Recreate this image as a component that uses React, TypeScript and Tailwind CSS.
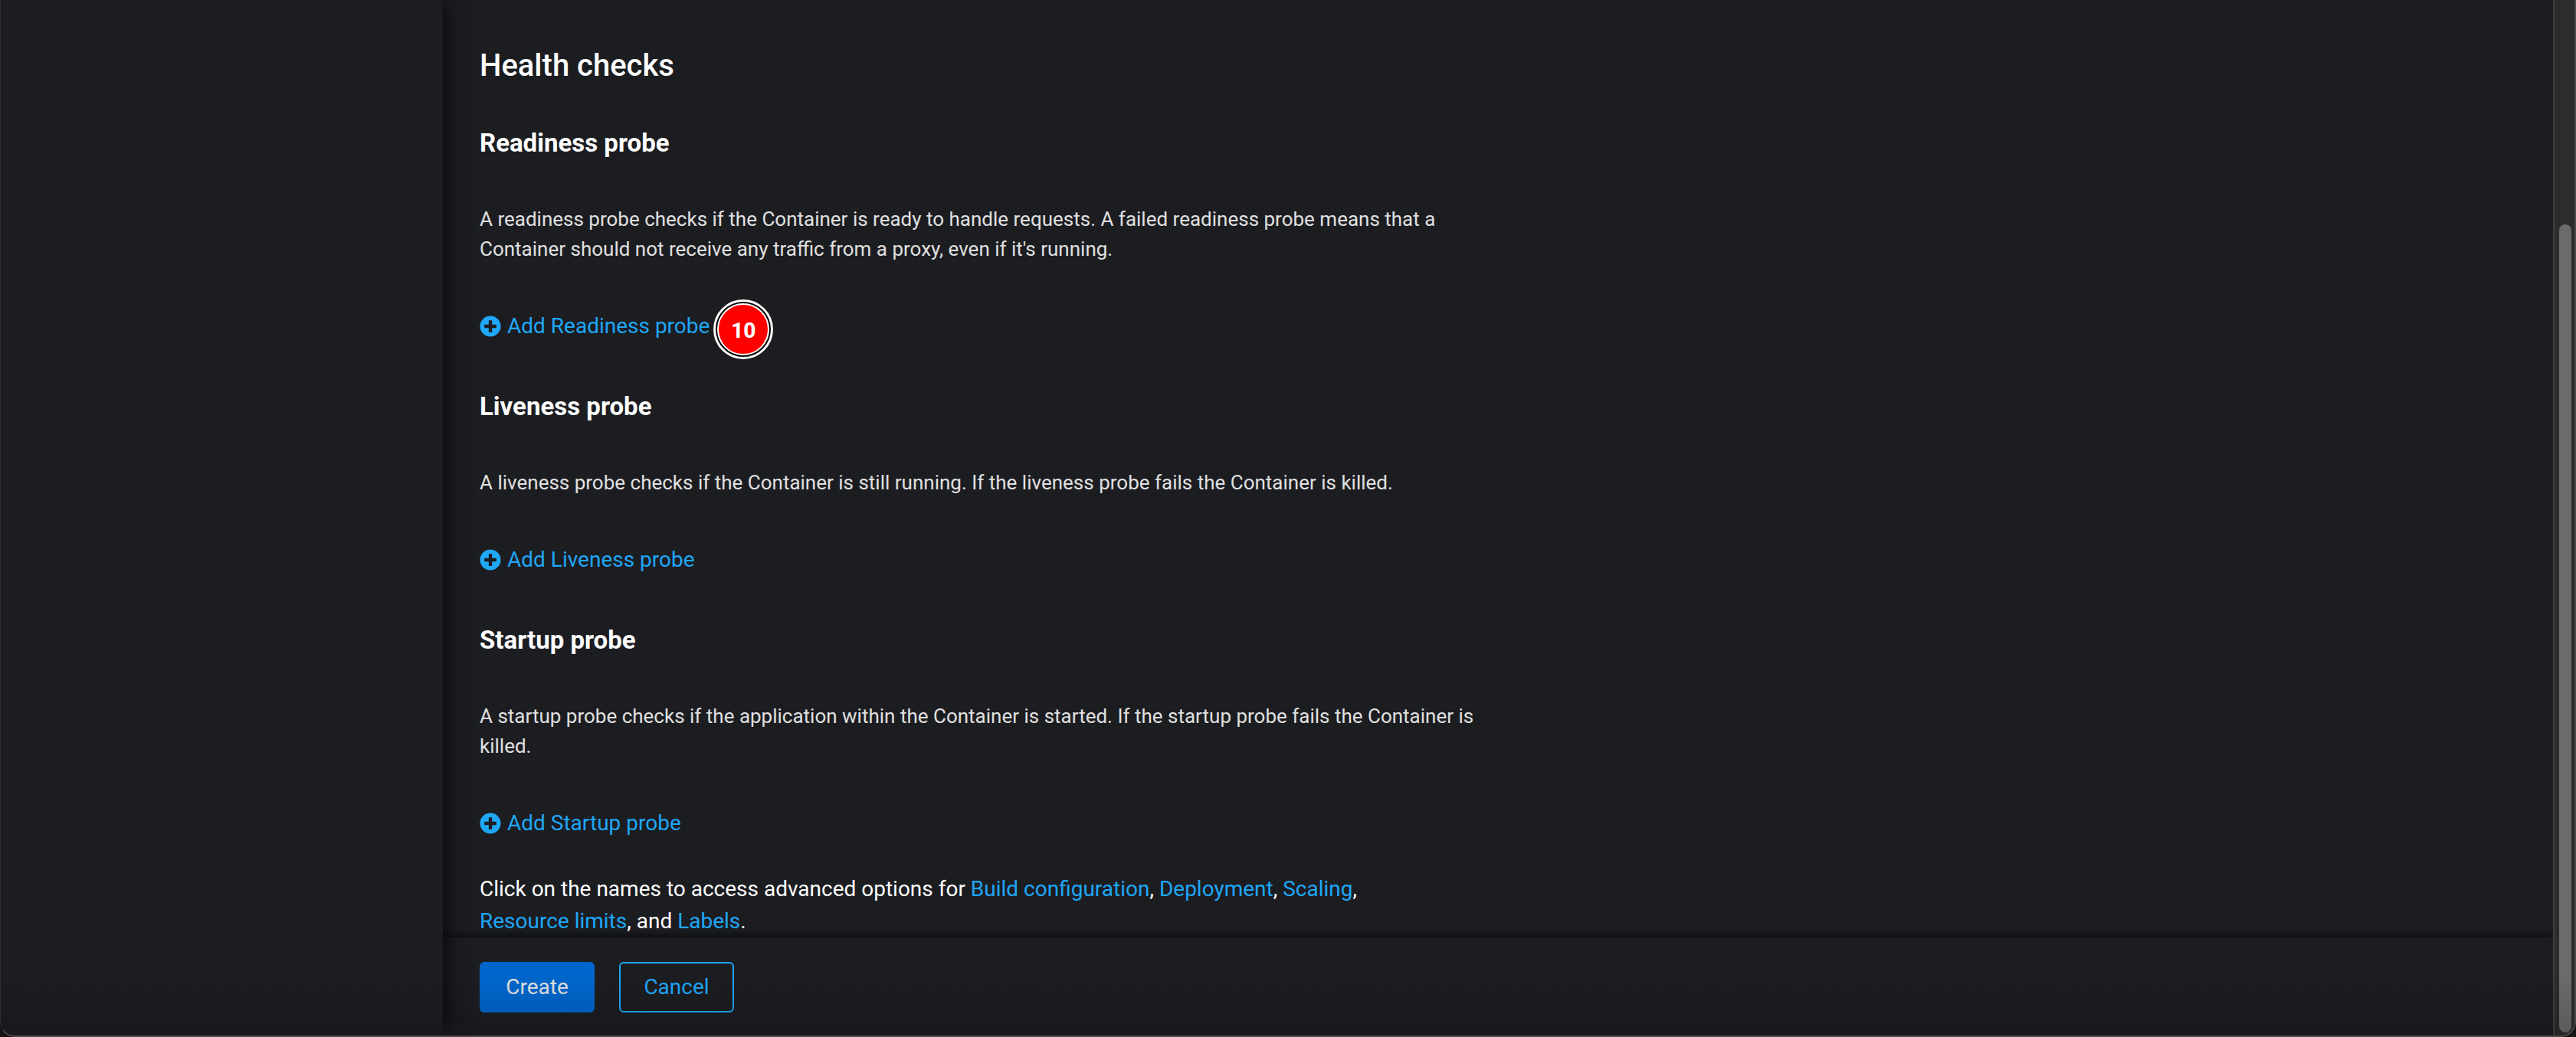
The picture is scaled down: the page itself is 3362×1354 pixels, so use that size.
import type { ReactNode } from "react";

type Probe = { name: string; description: string; step?: number };

const probes: Probe[] = [
  {
    name: "Readiness probe",
    description:
      "A readiness probe checks if the Container is ready to handle requests. A failed readiness probe means that a Container should not receive any traffic from a proxy, even if it's running.",
    step: 10,
  },
  {
    name: "Liveness probe",
    description:
      "A liveness probe checks if the Container is still running. If the liveness probe fails the Container is killed.",
  },
  {
    name: "Startup probe",
    description:
      "A startup probe checks if the application within the Container is started. If the startup probe fails the Container is killed.",
  },
];

function PlusCircleIcon() {
  return (
    <svg viewBox="0 0 512 512" className="size-7 fill-current" aria-hidden="true">
      <path d="M256 8C119 8 8 119 8 256s111 248 248 248 248-111 248-248S393 8 256 8zm144 276c0 6.600-5.400 12-12 12h-92v92c0 6.600-5.400 12-12 12h-56c-6.600 0-12-5.400-12-12v-92h-92c-6.600 0-12-5.400-12-12v-56c0-6.600 5.400-12 12-12h92v-92c0-6.600 5.400-12 12-12h56c6.600 0 12 5.400 12 12v92h92c6.600 0 12 5.400 12 12v56z" />
    </svg>
  );
}

function StepBadge({ value }: { value: number }) {
  return (
    <span className="absolute -top-3.5 left-full ml-[5px] flex size-[78px] items-center justify-center rounded-full border-3 border-white bg-black p-[2px]">
      <span className="flex size-full items-center justify-center rounded-full border-2 border-white bg-[#ff0000] pt-1 text-[28px] leading-8 font-extrabold text-white">
        {value}
      </span>
    </span>
  );
}

function ProbeSection({ name, description, step }: Probe) {
  return (
    <section className="flex flex-col items-start">
      <h3 className="text-[33px] leading-[48px] font-bold text-white">{name}</h3>
      <p className="mt-14 text-[26px] leading-[39px] text-[#e0e0e0]">{description}</p>
      <div className="relative mt-[60px] flex">
        <button type="button" className="flex items-center gap-2 text-[28px] leading-[42px] text-[#1fa7f8]">
          <PlusCircleIcon />
          Add {name}
        </button>
        {step !== undefined && <StepBadge value={step} />}
      </div>
    </section>
  );
}

function OptionLink({ children }: { children: ReactNode }) {
  return (
    <a href="#" className="inline-block text-[#1fa7f8]">
      {children}
    </a>
  );
}

function Scrollbar() {
  return (
    <div className="flex w-7 shrink-0 flex-col justify-end border-l-2 border-[#3f3f3f] bg-[#2c2c2c] pr-1 pb-1 pl-[6px]" aria-hidden="true">
      <div className="h-[calc(78%+4px)] rounded-full bg-[#6b6b6b]" />
    </div>
  );
}

export default function App() {
  return (
    <div className="flex min-h-screen bg-[#151515] font-[Roboto,sans-serif]">
      <div className="relative flex grow overflow-hidden rounded-b-[20px] border-r-2 border-b-2 border-l border-[#4b4b4b] border-l-[#2b2c2f] bg-[#1c1d21]">
        <aside className="relative z-10 w-[577px] shrink-0 bg-[#1c1d21] shadow-[16px_0_16px_-12px_rgba(3,3,3,0.5),4px_0_32px_rgba(3,3,3,0.3)]" />
        <main className="flex min-w-0 grow flex-col">
          <div className="flex max-w-[1408px] flex-col px-12 pt-[60px]">
            <h2 className="text-[40px] leading-[52px] font-medium text-white">Health checks</h2>
            <div className="mt-[51px] flex flex-col gap-[60px]">
              {probes.map((probe) => (
                <ProbeSection key={probe.name} {...probe} />
              ))}
            </div>
            <p className="mt-11 text-[28px] leading-[42px] text-white">
              Click on the names to access advanced options for <OptionLink>Build configuration</OptionLink>,{" "}
              <OptionLink>Deployment</OptionLink>, <OptionLink>Scaling</OptionLink>,{" "}
              <OptionLink>Resource limits</OptionLink>, and <OptionLink>Labels</OptionLink>.
            </p>
          </div>
          <footer className="mt-auto flex grow items-start gap-8 px-12 pt-8 pb-7 shadow-[0_-4px_8px_-1px_rgba(3,3,3,0.6)]">
            <button type="button" className="min-w-[150px] rounded-md bg-[#0066cc] px-8 py-3 text-[28px] leading-[42px] text-[#e0e0e0]">
              Create
            </button>
            <button type="button" className="min-w-[150px] rounded-md border-2 border-[#1fa7f8] px-[30px] py-[10px] text-[28px] leading-[42px] text-[#1fa7f8]">
              Cancel
            </button>
          </footer>
        </main>
        <Scrollbar />
        <div className="pointer-events-none absolute inset-x-0 bottom-0 z-20 h-20 bg-linear-to-t from-black/15 to-transparent" />
      </div>
    </div>
  );
}
